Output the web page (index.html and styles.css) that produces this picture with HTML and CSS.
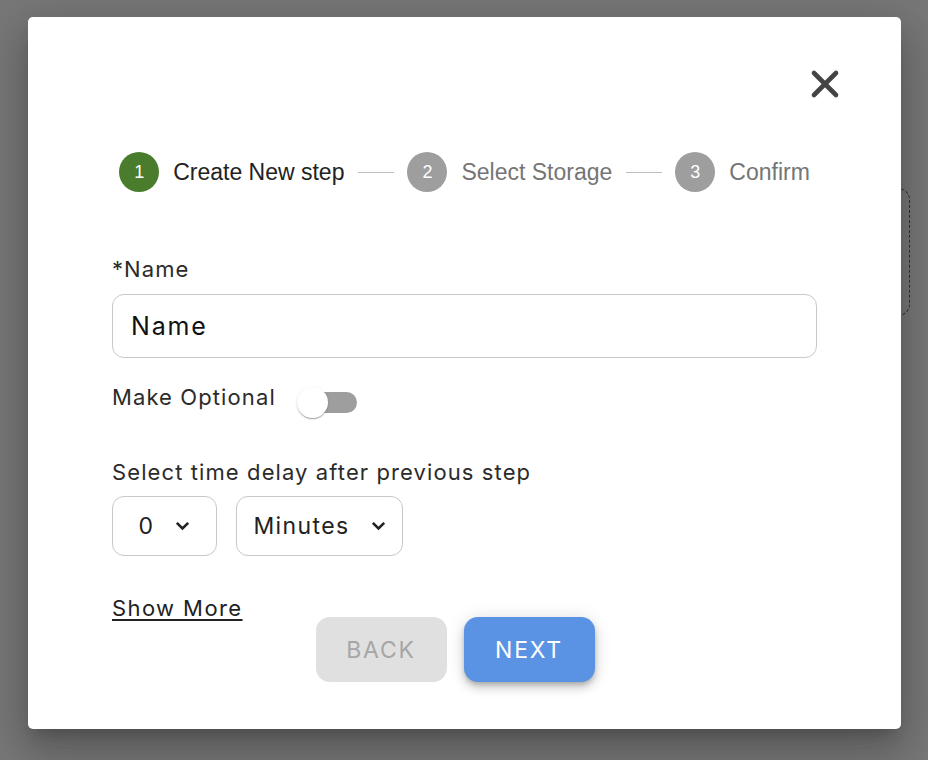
FILE: index.html
```html
<!DOCTYPE html>
<html lang="en">
<head>
    <meta charset="UTF-8">
    <title>Create step</title>
    <link rel="stylesheet" href="styles.css">
</head>
<body>
    <div class="behind_card"></div>
    <div class="backdrop">
        <div class="modal">
            <button class="btn_close" aria-label="close">
                <svg viewBox="0 0 30 30" width="30" height="30"><path d="M4 4 26 26M26 4 4 26" fill="none" stroke="#444" stroke-width="4.6" stroke-linecap="round"/></svg>
            </button>

            <div class="stepper">
                <div class="step active">
                    <span class="step_icon">1</span>
                    <span class="step_label">Create New step</span>
                </div>
                <div class="connector"></div>
                <div class="step">
                    <span class="step_icon">2</span>
                    <span class="step_label">Select Storage</span>
                </div>
                <div class="connector"></div>
                <div class="step">
                    <span class="step_icon">3</span>
                    <span class="step_label">Confirm</span>
                </div>
            </div>

            <label class="field_label" for="StepName">*Name</label>
            <input class="text_input" type="text" id="StepName" value="Name"/>

            <div class="row_optional">
                <span class="field_label">Make Optional</span>
                <span class="switch">
                    <span class="switch_track"></span>
                    <span class="switch_thumb"></span>
                </span>
            </div>

            <div class="field_label delay_label">Select time delay after previous step</div>
            <div class="row_selects">
                <div class="select_box small">
                    <span>0</span>
                    <svg width="15" height="10" viewBox="0 0 15 10"><path d="M1.8 1.8 7.5 7.5l5.7-5.7" fill="none" stroke="#222" stroke-width="2.6"/></svg>
                </div>
                <div class="select_box wide">
                    <span>Minutes</span>
                    <svg width="15" height="10" viewBox="0 0 15 10"><path d="M1.8 1.8 7.5 7.5l5.7-5.7" fill="none" stroke="#222" stroke-width="2.6"/></svg>
                </div>
            </div>

            <a class="show_more" href="#">Show More</a>

            <div class="row_btn">
                <button class="btn_back" disabled>BACK</button>
                <button class="btn_next">NEXT</button>
            </div>
        </div>
    </div>
</body>
</html>
```

FILE: styles.css
```css
* {
    box-sizing: border-box;
}
body {
    margin: 0;
    height: 760px;
    overflow: hidden;
    background-color: #777;
    font-family: Inter, "Noto Sans", sans-serif;
    position: relative;
}
.behind_card {
    position: absolute;
    top: 188px;
    left: 600px;
    width: 310px;
    height: 128px;
    border: 1px dashed #2e2e2e;
    border-radius: 12px;
}
.backdrop {
    position: relative;
    padding: 17px 27px 0 28px;
}
.modal {
    position: relative;
    width: 873px;
    height: 712px;
    background-color: #fff;
    border-radius: 5px;
    padding: 135px 84px 0 84px;
    display: flex;
    flex-direction: column;
    box-shadow: 0 11px 15px -7px rgba(0,0,0,.2), 0 24px 38px 3px rgba(0,0,0,.14), 0 9px 46px 8px rgba(0,0,0,.12);
}
.btn_close {
    position: absolute;
    top: 52px;
    right: 61px;
    padding: 0;
    border: none;
    background: none;
    line-height: 0;
    cursor: pointer;
}

.stepper {
    display: flex;
    align-items: center;
    justify-content: center;
    height: 40px;
    font-family: "Liberation Sans", Arial, sans-serif;
}
.step {
    display: flex;
    align-items: center;
}
.step_icon {
    width: 40px;
    height: 40px;
    border-radius: 50%;
    background-color: #9e9e9e;
    color: #fff;
    font-size: 18px;
    display: flex;
    align-items: center;
    justify-content: center;
}
.step_label {
    margin-left: 14px;
    font-size: 23px;
    color: #757575;
}
.step.active .step_icon {
    background-color: #4a7c2d;
}
.step.active .step_label {
    color: #222;
}
.connector {
    width: 36px;
    border-top: 1px solid #bdbdbd;
    margin: 0 13px 0 14px;
}

.field_label {
    font-size: 22px;
    line-height: 24px;
    color: #2b2b2b;
    letter-spacing: 1.1px;
}
label.field_label {
    margin-top: 65px;
}
.text_input {
    margin-top: 13px;
    height: 64px;
    width: 100%;
    border: 1px solid #c8c8c8;
    border-radius: 12px;
    padding: 0 18px;
    font-family: Inter, "Noto Sans", sans-serif;
    font-size: 25px;
    letter-spacing: 1.8px;
    color: #111;
}

.row_optional {
    display: flex;
    align-items: flex-start;
    margin-top: 27px;
    height: 34px;
}
.switch {
    position: relative;
    width: 62px;
    height: 34px;
    margin-left: 21px;
}
.switch_track {
    position: absolute;
    left: 12px;
    top: 7px;
    width: 48px;
    height: 21px;
    border-radius: 11px;
    background-color: #9e9e9e;
}
.switch_thumb {
    position: absolute;
    left: 0;
    top: 2px;
    width: 31px;
    height: 31px;
    border-radius: 50%;
    background-color: #fff;
    box-shadow: 0 2px 1px -1px rgba(0,0,0,.2), 0 1px 1px 0 rgba(0,0,0,.14), 0 1px 3px 0 rgba(0,0,0,.12);
}

.delay_label {
    margin-top: 41px;
}
.row_selects {
    display: flex;
    gap: 19px;
    margin-top: 12px;
}
.select_box {
    height: 60px;
    border: 1px solid #c8c8c8;
    border-radius: 12px;
    display: flex;
    align-items: center;
    justify-content: center;
    gap: 21px;
    font-size: 23px;
    letter-spacing: 1.4px;
    color: #222;
}
.select_box.small {
    width: 105px;
}
.select_box.wide {
    width: 167px;
}

.show_more {
    align-self: flex-start;
    margin-top: 40px;
    font-size: 22px;
    line-height: 24px;
    color: #222;
    letter-spacing: 1.4px;
    text-decoration: underline;
    text-decoration-thickness: 2px;
    text-underline-offset: 3px;
}

.row_btn {
    display: flex;
    justify-content: center;
    gap: 17px;
    padding-right: 19px;
    margin-top: -3px;
}
.btn_back, .btn_next {
    height: 65px;
    width: 131px;
    border: none;
    border-radius: 14px;
    font-family: Inter, "Noto Sans", sans-serif;
    font-size: 23px;
    letter-spacing: 1.8px;
    cursor: pointer;
}
.btn_back {
    background-color: #e0e0e0;
    color: #a6a6a6;
}
.btn_next {
    background-color: #5a93e3;
    color: #fff;
    box-shadow: 0 3px 5px -1px rgba(0,0,0,.2), 0 6px 10px 0 rgba(0,0,0,.14), 0 1px 18px 0 rgba(0,0,0,.12);
}
```
